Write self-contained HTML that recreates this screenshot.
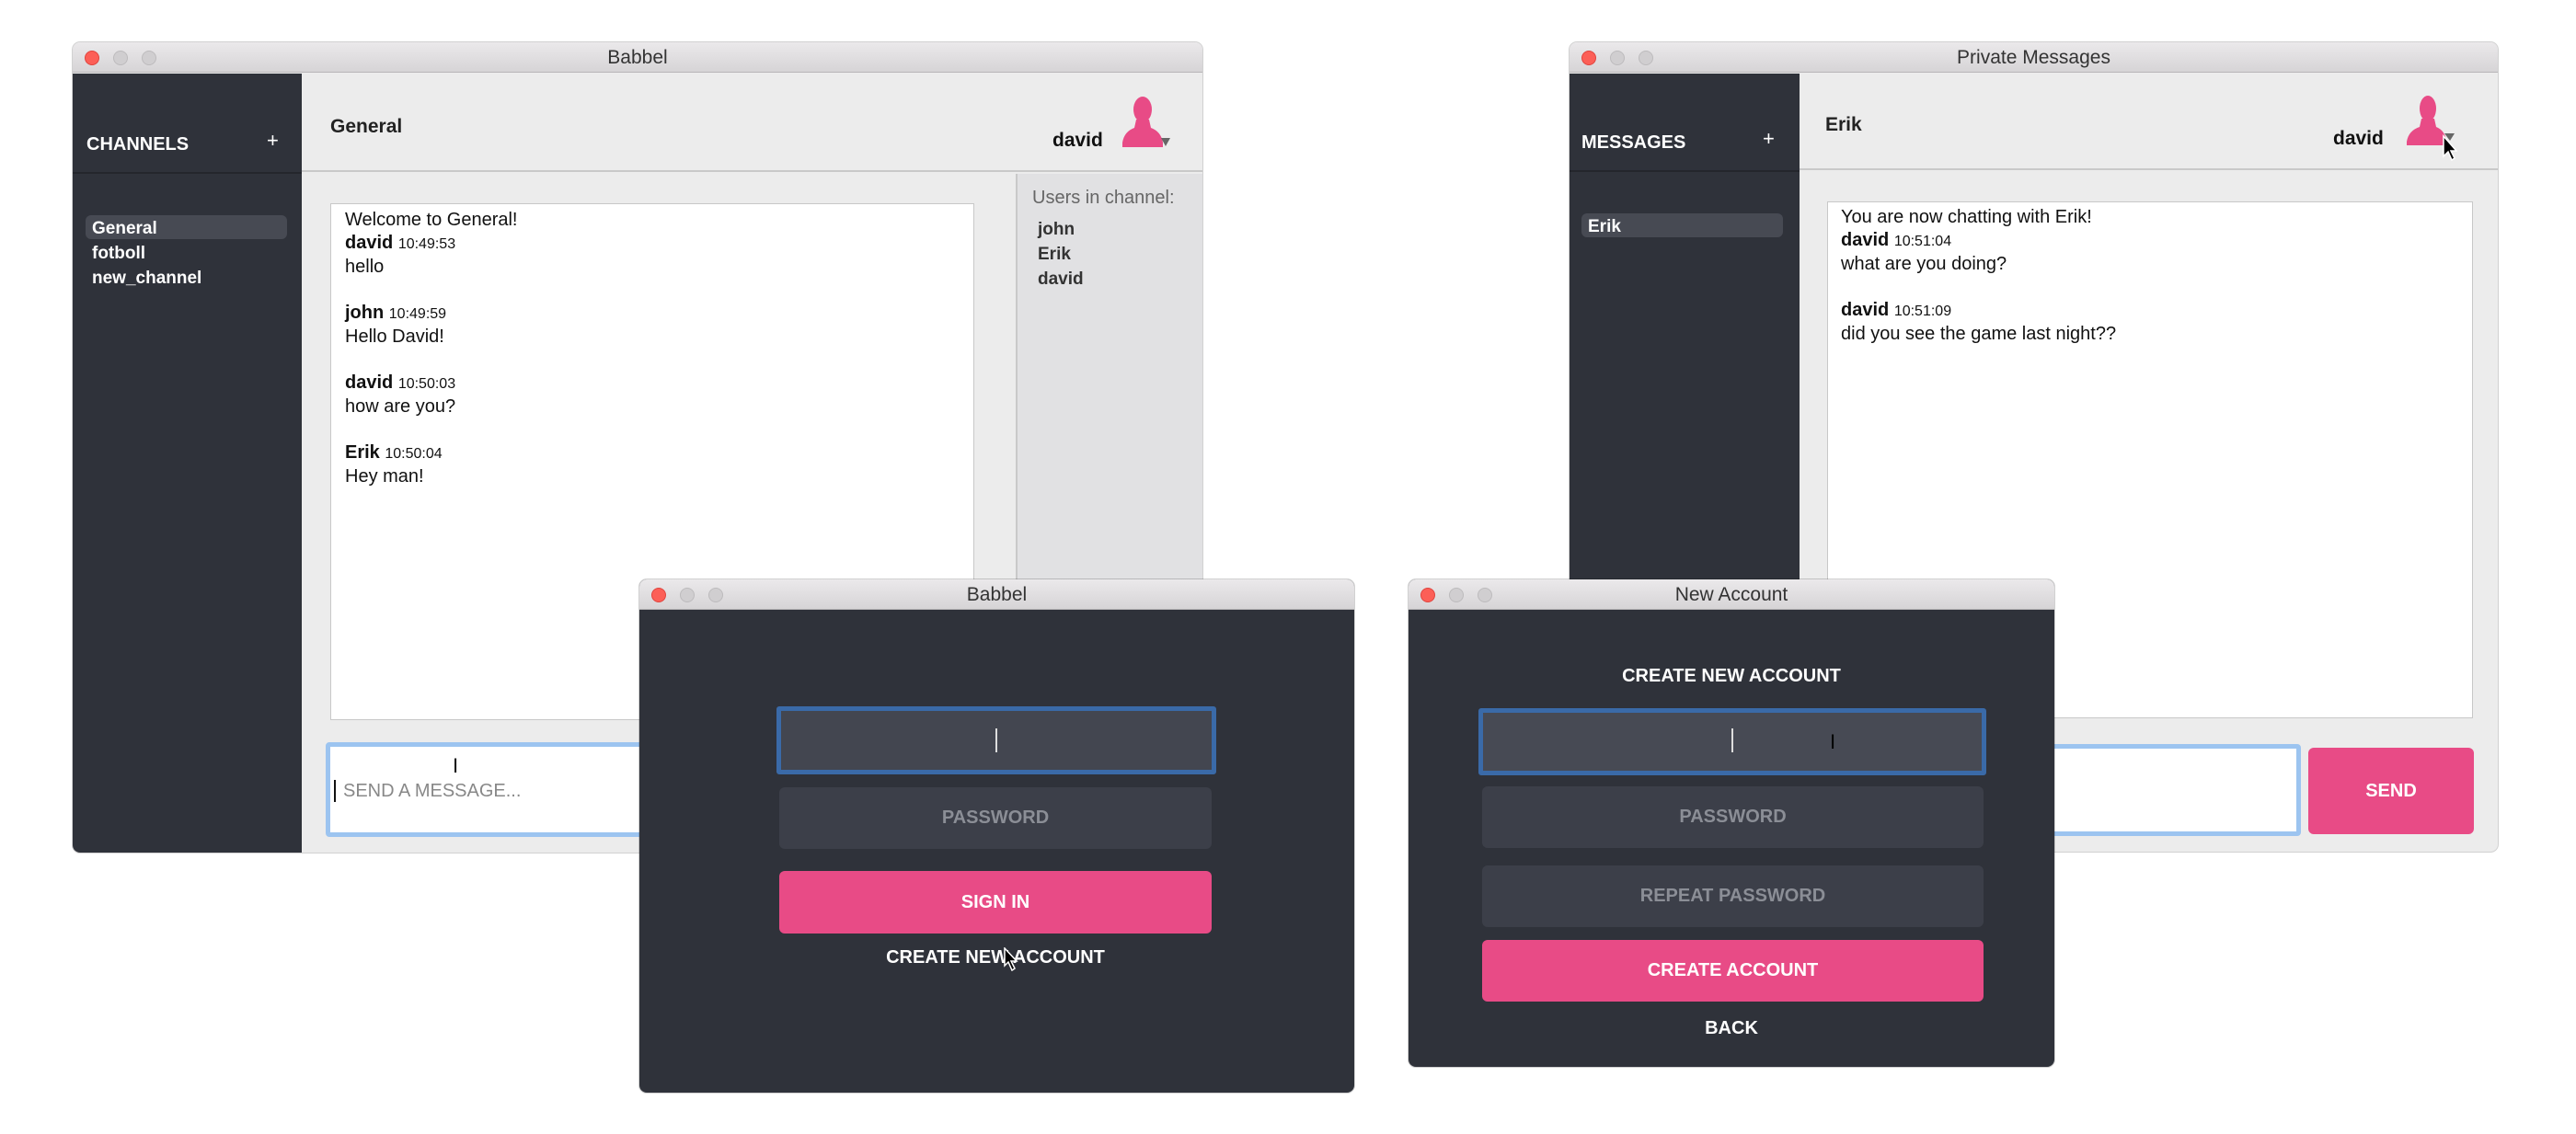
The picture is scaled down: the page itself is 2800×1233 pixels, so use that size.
<!DOCTYPE html>
<html><head><meta charset="utf-8"><style>
*{margin:0;padding:0;box-sizing:border-box}
body{width:2800px;height:1233px;background:#fff;position:relative;overflow:hidden;font-family:"Liberation Sans",Arial,sans-serif}
.a{position:absolute}
.win{position:absolute;border-radius:8px;overflow:hidden;box-shadow:0 0 0 1px rgba(0,0,0,.18)}
.tb{position:absolute;left:0;right:0;top:0;height:33px;background:linear-gradient(#ebe9eb,#d6d4d6);border-bottom:1px solid #b8b6b8;text-align:center;font-size:21px;line-height:33px;color:#333}
.dot{position:absolute;top:9px;width:16px;height:16px;border-radius:50%;background:#d0ced0;border:1px solid #bdbbbd}
.red{background:#fc5f57;border-color:#e0443e}
.dark{background:#2f323a}
.b{font-weight:bold}
.ts{font-size:16px;font-weight:normal}
.msg{font-size:20px;line-height:25px;color:#111}
.fld{position:absolute;background:#3c3f49;border-radius:6px;color:#8b8e96;font-weight:bold;font-size:20px;text-align:center}
.pink{position:absolute;background:#e84b86;border-radius:6px;color:#fff;font-weight:bold;font-size:20px;text-align:center}
</style></head><body>

<!-- Main window -->
<div class="win" style="left:79px;top:46px;width:1228px;height:881px;background:#ececec">
  <div class="tb">Babbel</div>
  <div class="dot red" style="left:13px"></div><div class="dot" style="left:44px"></div><div class="dot" style="left:75px"></div>
  <div class="a dark" style="left:0;top:34px;width:249px;bottom:0"></div>
  <div class="a" style="left:0;top:141px;width:249px;height:2px;background:#24262c"></div>
  <div class="a b" style="left:15px;top:100px;color:#fff;font-size:20px">CHANNELS</div>
  <div class="a" style="left:211px;top:94px;color:#fff;font-size:22px">+</div>
  <div class="a" style="left:14px;top:188px;width:219px;height:26px;background:#474a53;border-radius:6px"></div>
  <div class="a b" style="left:21px;top:189px;color:#fff;font-size:19px;line-height:27px">General<br>fotboll<br>new_channel</div>
  <div class="a" style="left:249px;top:34px;right:0;height:107px;background:#ececec;border-bottom:2px solid #c9c9c9"></div>
  <div class="a b" style="left:280px;top:80px;font-size:21px;color:#222">General</div>
  <div class="a b" style="left:1065px;top:95px;font-size:21px;color:#111">david</div>
  <svg class="a" style="left:1141px;top:58px" width="52" height="60" viewBox="0 0 52 60"><ellipse cx="22" cy="15" rx="10" ry="14" fill="#e84b86"/><path d="M15 26 L29 26 L31 35 Q42 39 44 51 L44 56 L0 56 L0 51 Q2 39 13 35 Z" fill="#e84b86"/><path d="M42 46 L52 46 L47 55 Z" fill="#666"/></svg>
  <div class="a" style="left:1025px;top:143px;right:0;bottom:0;background:#e1e1e3;border-left:2px solid #c9c9c9"></div>
  <div class="a" style="left:1043px;top:158px;font-size:20px;color:#666">Users in channel:</div>
  <div class="a b" style="left:1049px;top:190px;font-size:19px;line-height:27px;color:#333">john<br>Erik<br>david</div>
  <div class="a" style="left:280px;top:175px;width:700px;height:562px;background:#fff;border:1px solid #c8c8c8"></div>
  <div class="a msg" style="left:296px;top:181px">Welcome to General!<br><b>david</b> <span class="ts">10:49:53</span><br>hello<br><br><b>john</b> <span class="ts">10:49:59</span><br>Hello David!<br><br><b>david</b> <span class="ts">10:50:03</span><br>how are you?<br><br><b>Erik</b> <span class="ts">10:50:04</span><br>Hey man!</div>
  <div class="a" style="left:275px;top:761px;width:800px;height:103px;background:#fff;border:5px solid #9cc4f0;border-radius:4px"></div>
  <div class="a" style="left:284px;top:802px;width:2px;height:24px;background:#111"></div>
  <div class="a" style="left:294px;top:803px;font-size:20px;color:#888">SEND A MESSAGE...</div>
  <div class="a" style="left:413px;top:774px;font-size:22px;color:#111">I</div>
</div>

<!-- Private messages window -->
<div class="win" style="left:1706px;top:46px;width:1009px;height:880px;background:#ececec">
  <div class="tb">Private Messages</div>
  <div class="dot red" style="left:13px"></div><div class="dot" style="left:44px"></div><div class="dot" style="left:75px"></div>
  <div class="a dark" style="left:0;top:34px;width:250px;bottom:0"></div>
  <div class="a" style="left:0;top:139px;width:250px;height:2px;background:#24262c"></div>
  <div class="a b" style="left:13px;top:98px;color:#fff;font-size:20px">MESSAGES</div>
  <div class="a" style="left:210px;top:92px;color:#fff;font-size:22px">+</div>
  <div class="a" style="left:13px;top:186px;width:219px;height:26px;background:#474a53;border-radius:6px"></div>
  <div class="a b" style="left:20px;top:187px;color:#fff;font-size:19px;line-height:27px">Erik</div>
  <div class="a" style="left:250px;top:34px;right:0;height:105px;background:#ececec;border-bottom:2px solid #c9c9c9"></div>
  <div class="a b" style="left:278px;top:78px;font-size:21px;color:#222">Erik</div>
  <div class="a b" style="left:830px;top:93px;font-size:21px;color:#111">david</div>
  <svg class="a" style="left:910px;top:58px" width="56" height="72" viewBox="0 0 56 72"><ellipse cx="23" cy="14" rx="9" ry="14" fill="#e84b86"/><path d="M16 25 L30 25 L32 34 Q42 38 43 50 L43 54 L0 54 L0 50 Q2 38 14 34 Z" fill="#e84b86"/><path d="M41 41 L52 41 L47 49 Z" fill="#666"/><path d="M40 44 L40 66 L45 61 L49 70 L52 68 L48 60 L54 60 Z" fill="#000" stroke="#fff" stroke-width="1.5"/></svg>
  <div class="a" style="left:280px;top:173px;width:702px;height:562px;background:#fff;border:1px solid #c8c8c8"></div>
  <div class="a msg" style="left:295px;top:178px">You are now chatting with Erik!<br><b>david</b> <span class="ts">10:51:04</span><br>what are you doing?<br><br><b>david</b> <span class="ts">10:51:09</span><br>did you see the game last night??</div>
  <div class="a" style="left:200px;top:763px;width:595px;height:100px;background:#fff;border:5px solid #9cc4f0;border-radius:4px"></div>
  <div class="pink" style="left:803px;top:767px;width:180px;height:94px;line-height:94px">SEND</div>
</div>

<!-- Login window -->
<div class="win dark" style="left:695px;top:630px;width:777px;height:558px">
  <div class="tb">Babbel</div>
  <div class="dot red" style="left:13px"></div><div class="dot" style="left:44px"></div><div class="dot" style="left:75px"></div>
  <div class="a" style="left:149px;top:138px;width:478px;height:74px;background:#434650;border:5px solid #3a6aa8;border-radius:3px"></div>
  <div class="a" style="left:387px;top:162px;width:2px;height:26px;background:#ddd"></div>
  <div class="fld" style="left:152px;top:226px;width:470px;height:67px;line-height:67px">PASSWORD</div>
  <div class="pink" style="left:152px;top:317px;width:470px;height:68px;line-height:68px">SIGN IN</div>
  <div class="a b" style="left:0;width:774px;top:400px;text-align:center;color:#fff;font-size:20px">CREATE NEW ACCOUNT</div>
  <svg class="a" style="left:396px;top:400px" width="16" height="26" viewBox="0 0 16 26"><path d="M1 1 L1 20 L5 16 L9 25 L12 23 L8 15 L14 15 Z" fill="#000" stroke="#fff" stroke-width="1.5"/></svg>
</div>

<!-- New account window -->
<div class="win dark" style="left:1531px;top:630px;width:702px;height:530px">
  <div class="tb">New Account</div>
  <div class="dot red" style="left:13px"></div><div class="dot" style="left:44px"></div><div class="dot" style="left:75px"></div>
  <div class="a b" style="left:0;width:702px;top:94px;text-align:center;color:#fff;font-size:20px">CREATE NEW ACCOUNT</div>
  <div class="a" style="left:76px;top:140px;width:552px;height:73px;background:#474a54;border:5px solid #3a6aa8;border-radius:3px"></div>
  <div class="a" style="left:351px;top:162px;width:2px;height:26px;background:#ddd"></div>
  <div class="a" style="left:458px;top:164px;font-size:22px;color:#000">I</div>
  <div class="fld" style="left:80px;top:225px;width:545px;height:67px;line-height:67px">PASSWORD</div>
  <div class="fld" style="left:80px;top:311px;width:545px;height:67px;line-height:67px">REPEAT PASSWORD</div>
  <div class="pink" style="left:80px;top:392px;width:545px;height:67px;line-height:67px">CREATE ACCOUNT</div>
  <div class="a b" style="left:0;width:702px;top:477px;text-align:center;color:#fff;font-size:20px">BACK</div>
</div>
</body></html>
